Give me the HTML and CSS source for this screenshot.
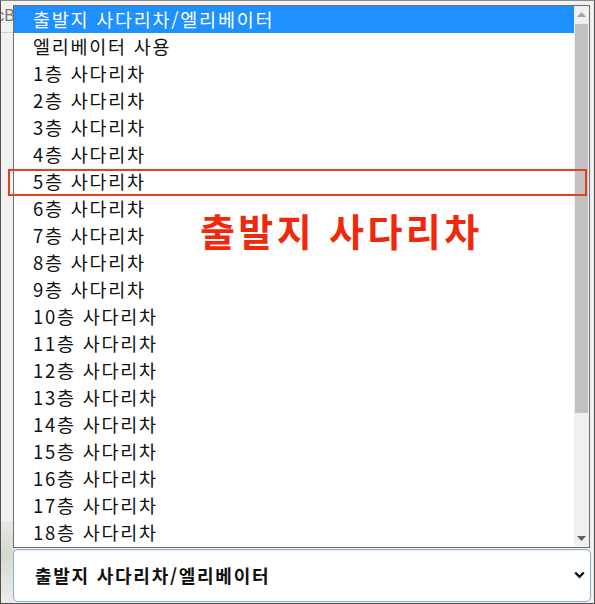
FILE: index.html
```html
<!DOCTYPE html>
<html lang="ko">
<head>
<meta charset="utf-8">
<title>출발지 사다리차</title>
<link rel="stylesheet" href="styles.css">
</head>
<body>
<div class="frame">
  <div class="backdrop">
    <div class="bg-row"><span class="bg-text">abcB</span></div>
    <div class="bg-blur"></div>
  </div>

  <div class="stack">
    <div class="listbox">
      <ul class="options">
        <li class="opt selected">출발지 사다리차/엘리베이터</li>
        <li class="opt">엘리베이터 사용</li>
        <li class="opt">1층 사다리차</li>
        <li class="opt">2층 사다리차</li>
        <li class="opt">3층 사다리차</li>
        <li class="opt">4층 사다리차</li>
        <li class="opt">5층 사다리차</li>
        <li class="opt">6층 사다리차</li>
        <li class="opt">7층 사다리차</li>
        <li class="opt">8층 사다리차</li>
        <li class="opt">9층 사다리차</li>
        <li class="opt">10층 사다리차</li>
        <li class="opt">11층 사다리차</li>
        <li class="opt">12층 사다리차</li>
        <li class="opt">13층 사다리차</li>
        <li class="opt">14층 사다리차</li>
        <li class="opt">15층 사다리차</li>
        <li class="opt">16층 사다리차</li>
        <li class="opt">17층 사다리차</li>
        <li class="opt">18층 사다리차</li>
      </ul>
      <div class="scrollbar">
        <div class="arrow up"><svg width="9" height="5" viewBox="0 0 9 5"><path d="M0 5 L4.5 0 L9 5 Z" fill="#a3a3a3"/></svg></div>
        <div class="track"><div class="thumb"></div></div>
        <div class="arrow down"><svg width="9" height="5" viewBox="0 0 9 5"><path d="M0 0 L4.5 5 L9 0 Z" fill="#606060"/></svg></div>
      </div>
    </div>

    <div class="select">
      <span class="select-text">출발지 사다리차/엘리베이터</span>
      <svg class="chev" width="11" height="8" viewBox="0 0 11 8"><path d="M1.2 1.5 L5.5 5.8 L9.8 1.5" fill="none" stroke="#111" stroke-width="2.4"/></svg>
    </div>
  </div>

  <div class="mark-box"></div>
  <div class="mark-text">출발지 사다리차</div>
</div>
</body>
</html>
```

FILE: styles.css
```css
* { box-sizing: border-box; }
html, body { margin: 0; padding: 0; }
body { background: #f0f0f0; font-family: "Noto Sans CJK KR", "Noto Sans", sans-serif; }

.frame {
  position: relative;
  width: 595px;
  height: 604px;
  border: 1px solid #505050;
  border-top-color: #8a8a8a;
  background: #f1f1f1;
  overflow: hidden;
}

.backdrop { position: absolute; left: 0; top: 0; width: 14px; height: 602px; }
.bg-row {
  height: 32px;
  border-bottom: 1px solid #cfcfcf;
  overflow: hidden;
  display: flex;
  justify-content: flex-end;
  padding-top: 6px;
}
.bg-text { font-family: "Liberation Sans", sans-serif; font-size: 16px; color: #777; white-space: nowrap; }
.bg-blur {
  position: absolute; left: 0; top: 520px; width: 14px; height: 82px;
  background: linear-gradient(180deg, #e7e8e2 0%, #d6d9cf 40%, #e2e3dd 70%, #ececea 100%);
}

.stack {
  position: relative;
  display: flex;
  flex-direction: column;
  padding: 4px 0 0 12px;
  gap: 1px;
}

.listbox {
  width: 577px;
  height: 543px;
  border: 1px solid #6e6e6e;
  background: #fff;
  display: flex;
}
.options { list-style: none; margin: 0; padding: 0; width: 560px; }
.opt {
  height: 27px;
  line-height: 27px;
  padding-left: 19px;
  font-size: 18.5px;
  letter-spacing: 1.75px;
  color: #111;
  white-space: nowrap;
}
.opt.selected { background: #1e90ff; color: #fff; }

.scrollbar {
  width: 15px;
  background: #f0f0f0;
  display: flex;
  flex-direction: column;
}
.arrow { height: 17px; display: flex; align-items: center; justify-content: center; }
.track { flex: 1; padding: 0 1px; }
.thumb { height: 389px; margin-top: 1px; background: #c1c1c1; }

.select {
  width: 578px;
  height: 53px;
  border: 1px solid #8aaed4;
  border-radius: 5px;
  background: #fff;
  display: flex;
  align-items: center;
  justify-content: space-between;
  padding: 0 5px 2px 21px;
  box-shadow: inset 0 1px 2px rgba(0,0,0,0.08);
}
.select-text { font-size: 18px; font-weight: 700; letter-spacing: 1.75px; color: #111; }
.chev { display: block; }

.mark-box {
  position: absolute;
  left: 7px;
  top: 168px;
  width: 579px;
  height: 27px;
  border: 2px solid #e2401f;
}
.mark-text {
  position: absolute;
  left: 199px;
  top: 202px;
  font-size: 38px;
  font-weight: 700;
  letter-spacing: 3.4px;
  line-height: 54px;
  color: #f0280c;
  white-space: nowrap;
}
```
